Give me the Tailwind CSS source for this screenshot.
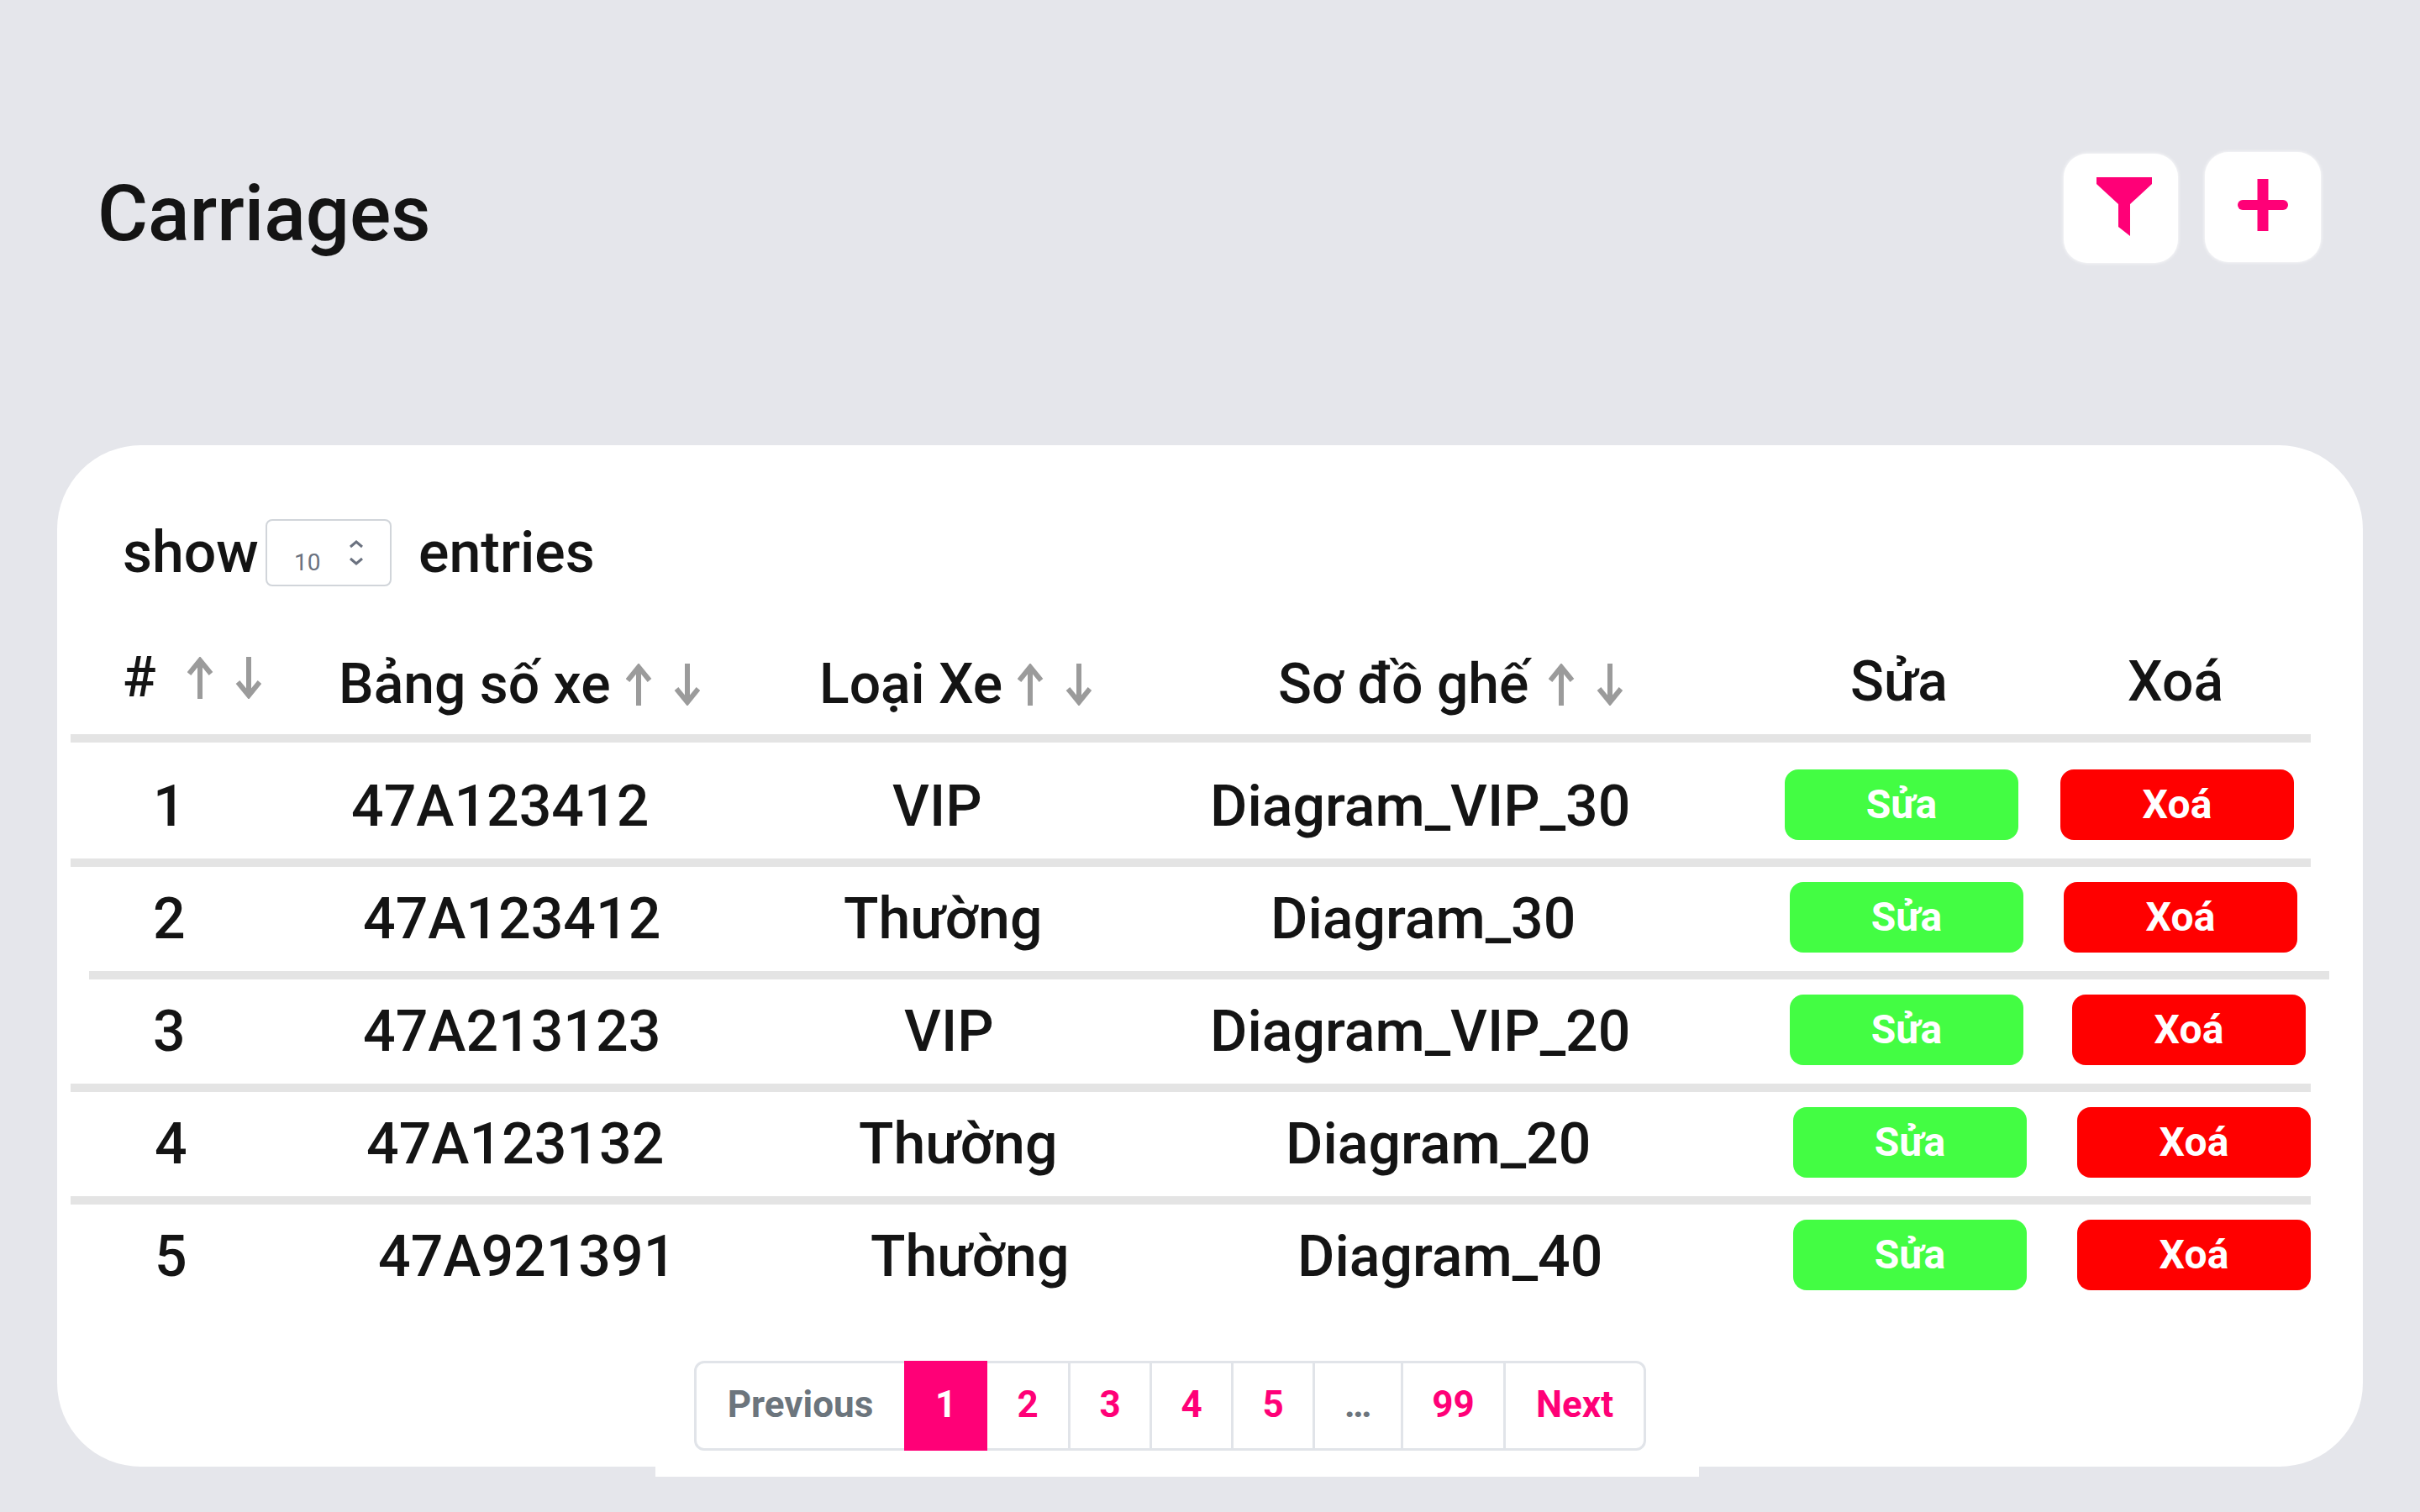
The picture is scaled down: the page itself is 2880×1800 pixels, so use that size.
<!DOCTYPE html>
<html lang="vi">
<head>
<meta charset="utf-8">
<title>Carriages</title>
<script src="https://cdn.jsdelivr.net/npm/@tailwindcss/browser@4"></script>
</head>
<body class="min-h-screen bg-[#e5e6eb] font-['Roboto',sans-serif] text-[#141414]">
<svg class="hidden" aria-hidden="true">
  <symbol id="sort" viewBox="0 0 88 50"><path d="M15 50V5M2 20L15 4L28 20M73 0V45M60 30L73 46L86 30" fill="none" stroke="#9b9b9b" stroke-width="6"/></symbol>
</svg>
<main class="px-[68px] pt-[179px]">
  <header class="mb-[199px] flex items-start justify-between pr-[50px] pl-12">
    <h1 class="text-[92px] leading-[152px] font-medium">Carriages</h1>
    <div class="flex gap-8">
      <button type="button" aria-label="Filter" class="mt-1 flex h-[130px] w-[136px] justify-center rounded-[28px] bg-white pt-[27px] shadow-[0_0_4px_#ffffff]">
        <svg class="ml-2 h-[71px] w-[68px]" viewBox="0 0 68 71"><path d="M1 1H67V9L41 33V71L27 60V33L1 9Z" fill="#ff0077"/></svg>
      </button>
      <button type="button" aria-label="Add" class="mt-[2px] flex h-[131px] w-[138px] justify-center rounded-[28px] bg-white pt-[32px] shadow-[0_0_4px_#ffffff]">
        <svg class="h-[62px] w-[60px]" viewBox="0 0 60 62"><path d="M30 0V62" stroke="#ff0077" stroke-width="13"/><path d="M6 31H54" stroke="#ff0077" stroke-width="12" stroke-linecap="round"/></svg>
      </button>
    </div>
  </header>

  <section class="flow-root rounded-[100px] bg-white px-4 pt-[88px]">
    <div class="flex h-20 items-center pl-[62px] text-[68px] leading-20 font-medium">
      <label for="entries" class="w-[170px]">show</label>
      <div class="relative mr-8">
        <select id="entries" class="block h-20 w-[150px] appearance-none rounded-lg border-2 border-[#d1d5da] bg-white pt-6 pl-8 text-[28px] leading-8 font-normal text-[#6b7280]"><option>10</option><option>25</option><option>50</option></select>
        <svg class="pointer-events-none absolute top-[25px] right-[34px] h-[30px] w-[16px]" viewBox="0 0 16 30"><path d="M1 8L8 2L15 8M1 22L8 28L15 22" fill="none" stroke="#6b7280" stroke-width="3"/></svg>
      </div>
      <span>entries</span>
    </div>

    <div class="pr-[46px]">
    <table class="w-full table-fixed text-left text-[68px] leading-[88px] whitespace-nowrap">
      <colgroup><col class="w-[300px]"><col class="w-[560px]"><col class="w-[480px]"><col class="w-[686px]"><col class="w-[330px]"><col class="w-[310px]"></colgroup>
      <thead class="text-[66px] leading-[84px]">
        <tr class="relative h-[186px] align-bottom after:absolute after:bottom-0 after:left-0 after:h-[10px] after:w-full after:bg-[#e4e4e4]">
          <th scope="col" class="pb-[35px] pl-[62px] font-medium"><div class="flex items-center"><span class="w-[77px]">#</span><svg class="h-[50px] w-[88px]"><use href="#sort"/></svg></div></th>
          <th scope="col" class="pb-[27px] pl-[19px] font-medium"><div class="flex items-center"><span class="w-[342px]">Bảng số xe</span><svg class="h-[50px] w-[88px]"><use href="#sort"/></svg></div></th>
          <th scope="col" class="pb-[27px] pl-[31px] font-medium"><div class="flex items-center"><span class="w-[236px]">Loại Xe</span><svg class="h-[50px] w-[88px]"><use href="#sort"/></svg></div></th>
          <th scope="col" class="pb-[27px] pl-[97px] font-medium"><div class="flex items-center"><span class="w-[322px]">Sơ đồ ghế</span><svg class="h-[50px] w-[88px]"><use href="#sort"/></svg></div></th>
          <th scope="col" class="pb-[30px] pl-[92px] font-medium">Sửa</th>
          <th scope="col" class="pb-[30px] pl-[92px] font-medium">Xoá</th>
        </tr>
      </thead>
      <tbody class="align-top font-medium">
        <tr class="relative h-[148px] after:absolute after:bottom-0 after:left-0 after:h-[10px] after:w-full after:bg-[#e4e4e4]">
          <td class="pt-8 pl-[98px]">1</td><td class="pt-8 pl-[34px]">47A123412</td><td class="pt-8 pl-[118px]">VIP</td><td class="pt-8 pl-4">Diagram_VIP_30</td>
          <td class="pt-8 pl-[14px]"><button type="button" class="block h-[84px] w-[278px] rounded-2xl bg-[#43fd43] text-[48px] leading-[84px] font-bold text-white">Sửa</button></td>
          <td class="pt-8 pl-3"><button type="button" class="block h-[84px] w-[278px] rounded-2xl bg-[#ff0000] text-[48px] leading-[84px] font-bold text-white">Xoá</button></td>
        </tr>
        <tr class="relative h-[134px] after:absolute after:bottom-0 after:left-[22px] after:h-[10px] after:w-full after:bg-[#e4e4e4]">
          <td class="pt-[18px] pl-[98px]">2</td><td class="pt-[18px] pl-12">47A123412</td><td class="pt-[18px] pl-[60px]">Thường</td><td class="pt-[18px] pl-[88px]">Diagram_30</td>
          <td class="pt-[18px] pl-5"><button type="button" class="block h-[84px] w-[278px] rounded-2xl bg-[#43fd43] text-[48px] leading-[84px] font-bold text-white">Sửa</button></td>
          <td class="pt-[18px] pl-4"><button type="button" class="block h-[84px] w-[278px] rounded-2xl bg-[#ff0000] text-[48px] leading-[84px] font-bold text-white">Xoá</button></td>
        </tr>
        <tr class="relative h-[134px] after:absolute after:bottom-0 after:left-0 after:h-[10px] after:w-full after:bg-[#e4e4e4]">
          <td class="pt-[18px] pl-[98px]">3</td><td class="pt-[18px] pl-12">47A213123</td><td class="pt-[18px] pl-[132px]">VIP</td><td class="pt-[18px] pl-4">Diagram_VIP_20</td>
          <td class="pt-[18px] pl-5"><button type="button" class="block h-[84px] w-[278px] rounded-2xl bg-[#43fd43] text-[48px] leading-[84px] font-bold text-white">Sửa</button></td>
          <td class="pt-[18px] pl-[26px]"><button type="button" class="block h-[84px] w-[278px] rounded-2xl bg-[#ff0000] text-[48px] leading-[84px] font-bold text-white">Xoá</button></td>
        </tr>
        <tr class="relative h-[134px] after:absolute after:bottom-0 after:left-0 after:h-[10px] after:w-full after:bg-[#e4e4e4]">
          <td class="pt-[18px] pl-[100px]">4</td><td class="pt-[18px] pl-[52px]">47A123132</td><td class="pt-[18px] pl-[78px]">Thường</td><td class="pt-[18px] pl-[106px]">Diagram_20</td>
          <td class="pt-[18px] pl-6"><button type="button" class="block h-[84px] w-[278px] rounded-2xl bg-[#43fd43] text-[48px] leading-[84px] font-bold text-white">Sửa</button></td>
          <td class="pt-[18px] pl-8"><button type="button" class="block h-[84px] w-[278px] rounded-2xl bg-[#ff0000] text-[48px] leading-[84px] font-bold text-white">Xoá</button></td>
        </tr>
        <tr class="h-[134px]">
          <td class="pt-[18px] pl-[100px]">5</td><td class="pt-[18px] pl-[66px]">47A921391</td><td class="pt-[18px] pl-[92px]">Thường</td><td class="pt-[18px] pl-[120px]">Diagram_40</td>
          <td class="pt-[18px] pl-6"><button type="button" class="block h-[84px] w-[278px] rounded-2xl bg-[#43fd43] text-[48px] leading-[84px] font-bold text-white">Sửa</button></td>
          <td class="pt-[18px] pl-8"><button type="button" class="block h-[84px] w-[278px] rounded-2xl bg-[#ff0000] text-[48px] leading-[84px] font-bold text-white">Xoá</button></td>
        </tr>
      </tbody>
    </table>
    </div>

    <nav aria-label="Pagination" class="-mb-3 ml-[696px] w-[1242px] bg-white pt-[52px] pb-[31px] pl-[46px]">
      <ul class="flex h-[107px] w-[1133px] rounded-xl border-3 border-[#e1e4e9] text-center text-[44px] leading-[99px] font-bold text-[#ff0077]">
        <li class="w-[247px] text-[#6c757d]"><a href="#" class="block">Previous</a></li>
        <li class="-my-[3px] w-[99px] bg-[#ff0077] text-white"><a href="#" class="block leading-[105px]" aria-current="page">1</a></li>
        <li class="w-[99px] border-r-3 border-[#e1e4e9]"><a href="#" class="block">2</a></li>
        <li class="w-[97px] border-r-3 border-[#e1e4e9]"><a href="#" class="block">3</a></li>
        <li class="w-[97px] border-r-3 border-[#e1e4e9]"><a href="#" class="block">4</a></li>
        <li class="w-[97px] border-r-3 border-[#e1e4e9]"><a href="#" class="block">5</a></li>
        <li class="w-[105px] border-r-3 border-[#e1e4e9] text-[#6c757d]">…</li>
        <li class="w-[122px] border-r-3 border-[#e1e4e9]"><a href="#" class="block">99</a></li>
        <li class="flex-1"><a href="#" class="block">Next</a></li>
      </ul>
    </nav>
  </section>
</main>
</body>
</html>
